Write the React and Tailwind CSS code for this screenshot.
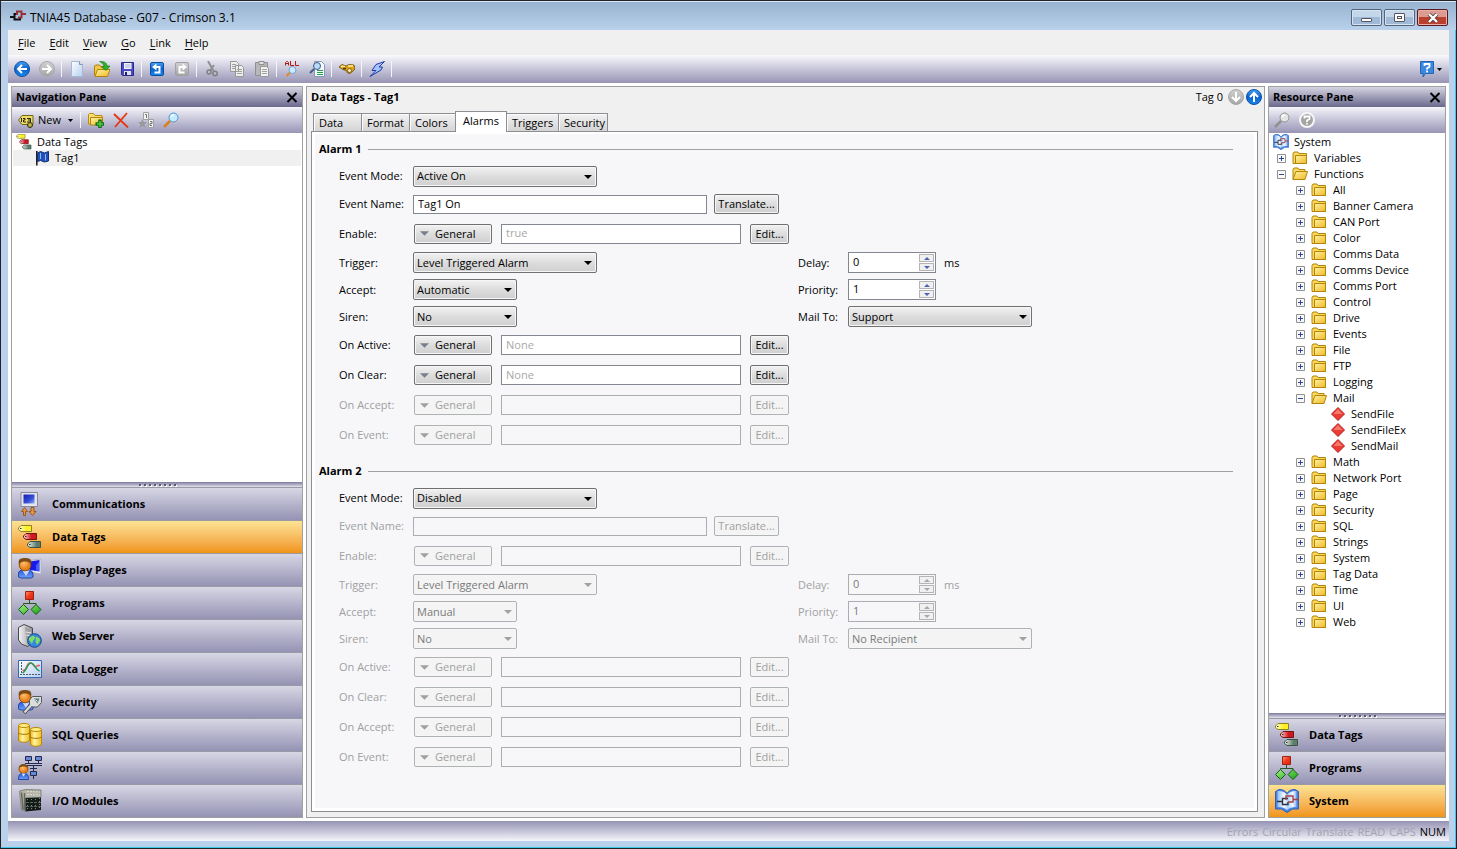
import { useState } from 'react';

// Shared gradients, referenced by id from the small icons below.
function IconDefs() {
  return (
    <svg width="0" height="0" className="absolute" aria-hidden="true">
      <defs>
        <linearGradient id="blue" x1="0" y1="0" x2="0" y2="1">
          <stop offset="0" stopColor="#4aa0f0" />
          <stop offset="0.5" stopColor="#0b62cc" />
          <stop offset="1" stopColor="#1b8af0" />
        </linearGradient>
        <linearGradient id="grey" x1="0" y1="0" x2="0" y2="1">
          <stop offset="0" stopColor="#d2d2d2" />
          <stop offset="1" stopColor="#a4a4a4" />
        </linearGradient>
        <linearGradient id="gold" x1="0" y1="0" x2="1" y2="1">
          <stop offset="0" stopColor="#fff3a0" />
          <stop offset="1" stopColor="#eeb828" />
        </linearGradient>
        <linearGradient id="paper" x1="0" y1="0" x2="1" y2="1">
          <stop offset="0" stopColor="#ffffff" />
          <stop offset="1" stopColor="#b4d0f2" />
        </linearGradient>
        <linearGradient id="red" x1="0" y1="0" x2="1" y2="1">
          <stop offset="0" stopColor="#ff9a80" />
          <stop offset="0.5" stopColor="#f03818" />
          <stop offset="1" stopColor="#d8201c" />
        </linearGradient>
        <linearGradient id="green" x1="0" y1="0" x2="1" y2="1">
          <stop offset="0" stopColor="#a8ee88" />
          <stop offset="1" stopColor="#14a014" />
        </linearGradient>
        <linearGradient id="screen" x1="0" y1="0" x2="1" y2="1">
          <stop offset="0" stopColor="#1420b0" />
          <stop offset="0.6" stopColor="#3850d8" />
          <stop offset="1" stopColor="#8cacf8" />
        </linearGradient>
        <linearGradient id="tag-yellow">
          <stop offset="0" stopColor="#ffffe8" />
          <stop offset="0.6" stopColor="#fff020" />
        </linearGradient>
        <linearGradient id="tag-red">
          <stop offset="0" stopColor="#ffe0e0" />
          <stop offset="0.6" stopColor="#d01820" />
        </linearGradient>
        <linearGradient id="tag-green">
          <stop offset="0" stopColor="#e8f4ec" />
          <stop offset="0.7" stopColor="#5c7c6c" />
        </linearGradient>
        <linearGradient id="shirt" x1="0" y1="0" x2="0" y2="1">
          <stop offset="0" stopColor="#2858d8" />
          <stop offset="1" stopColor="#70a0f8" />
        </linearGradient>
        <linearGradient id="drum">
          <stop offset="0" stopColor="#f0b820" />
          <stop offset="0.35" stopColor="#fff4a0" />
          <stop offset="1" stopColor="#f0c028" />
        </linearGradient>
        <linearGradient id="page">
          <stop offset="0" stopColor="#90c0f8" />
          <stop offset="0.35" stopColor="#f4faff" />
          <stop offset="0.55" stopColor="#a8d0fc" />
          <stop offset="0.8" stopColor="#f4faff" />
          <stop offset="1" stopColor="#88b4f4" />
        </linearGradient>
        <linearGradient id="case">
          <stop offset="0" stopColor="#f4f4f4" />
          <stop offset="0.5" stopColor="#c8c8cc" />
          <stop offset="1" stopColor="#8c8c90" />
        </linearGradient>
        <radialGradient id="skin" cx="0.4" cy="0.35">
          <stop offset="0" stopColor="#ffc070" />
          <stop offset="1" stopColor="#e88018" />
        </radialGradient>
      </defs>
    </svg>
  );
}

function Icon({ size = 16, children }) {
  return (
    <svg width={size} height={size} viewBox={`0 0 ${size} ${size}`} fill="none" className="shrink-0" aria-hidden="true">
      {children}
    </svg>
  );
}

const CrimsonIcon = () => (
  <Icon>
    <path d="M0 9h4M8 6H4.500v5.500H10V9" stroke="#111" strokeWidth="2" />
    <path d="M16 6h-4.500M7 7V3.500h4.500v6H8" stroke="#983038" strokeWidth="2" />
  </Icon>
);

function RoundArrow({ fill, d }) {
  return (
    <Icon>
      <circle cx="8" cy="8" r="7.500" fill={fill} stroke={fill === 'url(#blue)' ? '#0a50a8' : '#a8a8a8'} />
      <path d={d} stroke="#fff" strokeWidth="2" />
    </Icon>
  );
}
const BackIcon = () => <RoundArrow fill="url(#blue)" d="M13 8H4M8 4L4 8l4 4" />;
const ForwardIcon = () => <RoundArrow fill="url(#grey)" d="M3 8h9M8 4l4 4-4 4" />;

const NewIcon = () => (
  <Icon>
    <path d="M2.500.5h8l3 3v12h-11z" fill="url(#paper)" stroke="#a8b8d4" />
    <path d="M10.500.5v3h3" fill="#d8e6f8" stroke="#7c94bc" />
  </Icon>
);

const OpenIcon = () => (
  <Icon>
    <path d="M.5 14V5l1-1h4l1 1.500h6V14z" fill="#f0c848" stroke="#b08008" />
    <path d="M1 15.500l2.500-7H16l-2.500 7z" fill="url(#gold)" stroke="#b48408" />
    <path d="M5.500.5c4-.5 7.500 1 7.500 4.500h3L12 9.500 7.500 6H10C10 3 8 2 5.500.5z" fill="#30b028" stroke="#107810" strokeWidth="0.6" />
  </Icon>
);

const SaveIcon = () => (
  <Icon>
    <path d="M2.500 1.500h12v13h-11l-1-1z" fill="#4a4ac0" stroke="#2a2a90" />
    <path d="M5 2h7.500v6H5z" fill="#f0f2fc" />
    <path d="M6 4h5.500M6 6h5.500" stroke="#a8b0d8" />
    <path d="M5 10h7v4H5z" fill="#e0e0f0" />
    <path d="M6 11h2v3H6z" fill="#22226c" />
  </Icon>
);

function TurnIcon({ fill, stroke, flip }) {
  return (
    <Icon>
      <rect x="1.500" y="1.500" width="13" height="13" rx="1.500" fill={fill} stroke={stroke} />
      <g transform={flip ? 'translate(16 0) scale(-1 1)' : undefined}>
        <path d="M6 6h4.500v5.500H5.500" stroke="#fff" strokeWidth="2" />
        <path d="M3 6l4.500-3.500v7z" fill="#fff" />
      </g>
    </Icon>
  );
}
const UndoIcon = () => <TurnIcon fill="url(#blue)" stroke="#0a50a0" />;
const RedoIcon = () => <TurnIcon fill="url(#grey)" stroke="#a0a0a0" flip />;

const CutIcon = () => (
  <Icon>
    <path d="M4 0l5.500 10M10 4L6 10" stroke="#909090" strokeWidth="2" />
    <circle cx="5" cy="11" r="2" stroke="#808080" strokeWidth="1.500" />
    <circle cx="11" cy="12.500" r="2.200" stroke="#808080" strokeWidth="1.500" />
  </Icon>
);

const CopyIcon = () => (
  <Icon>
    <path d="M1.500.5h6l2 2v8h-8zM6.500 4.500h6l2 2v9h-8z" fill="#ececec" stroke="#989898" />
    <path d="M3 3.500h4M3 5.500h3M3 7.500h3M8 8.500h5M8 10.500h5M8 12.500h5" stroke="#a0a0a0" />
  </Icon>
);

const PasteIcon = () => (
  <Icon>
    <path d="M1.500 1.500h12v13h-12z" fill="#b8b8b8" stroke="#909090" />
    <path d="M5 .5h5v3H5z" fill="#e0e0e0" stroke="#909090" />
    <path d="M6.500 5.500h6l2 2v8h-8z" fill="#f2f2f2" stroke="#989898" />
    <path d="M8 8.500h5M8 10.500h5M8 12.500h5" stroke="#a0a0a0" />
  </Icon>
);

const FindAllIcon = () => (
  <Icon>
    <path d="M6 11.500L2.500 15" stroke="#e08828" strokeWidth="2.200" />
    <circle cx="8.500" cy="9" r="3.500" fill="#c8ecff" stroke="#78a0d0" />
    <path d="M1.500 4.500V1.500l1-1h1l1 1v3M1.500 2.500h3M6.500 0v4.500H10M11.500 0v4.500H15" stroke="#b01818" />
  </Icon>
);

const FindInPageIcon = () => (
  <Icon>
    <path d="M5.500.5h7l3 3v12h-10z" fill="#f4f8ff" stroke="#8898b8" />
    <path d="M8 9.500h6M8 11.500h6M8 13.500h6" stroke="#20a040" />
    <path d="M5 8l-4 4" stroke="#486088" strokeWidth="2.200" />
    <circle cx="8" cy="5" r="3.500" fill="#b8dcf8" stroke="#405888" />
  </Icon>
);

const BinocularsIcon = () => (
  <Icon>
    <path d="M0 6l3-2.500 4 1.500 3-1.500 5 .5 1 4-2 2-3 2.500-2.500-.5-1-2.500L5 9 3 8z" fill="#e0a018" stroke="#704c08" strokeWidth="0.800" />
    <path d="M2 5.500h4M9 5h5" stroke="#fff0a8" strokeWidth="1.500" />
    <circle cx="10.500" cy="9.500" r="2" fill="#fff0b0" stroke="#886010" />
    <path d="M4 7.500h3" stroke="#503404" strokeWidth="1.500" />
  </Icon>
);

const BoltIcon = () => (
  <Icon>
    <path d="M15.500.5L7 3.500 3 9.500h4L1 15.500 12 9l1.500-3H10z" fill="#a8c4fc" stroke="#1c3ca8" />
  </Icon>
);

const HelpIcon = () => (
  <Icon>
    <path d="M1.500.5h13v12h-8L4 16v-3.500H1.500z" fill="#3c88dc" stroke="#2464b4" />
    <path d="M5.500 5V3h5v2.500L8 7.500V8.500M8 9.500v2" stroke="#fff" strokeWidth="1.800" />
  </Icon>
);

const NumberTagIcon = () => (
  <Icon>
    <path d="M.5 8L4 3.500h11v9H4z" fill="#f0dc60" stroke="#70681c" />
    <path d="M3.500 6v4M5 6.500h2V8H5.500v2H8M9 6.500h3.500v3.500H9M10 8h2" stroke="#222" strokeWidth="1" />
    <path d="M12 10v6M9 13h6" stroke="#404010" strokeWidth="3" />
    <path d="M12 11v4M10 13h4" stroke="#f0e060" />
  </Icon>
);

const NewFolderIcon = () => (
  <Icon>
    <path d="M.5 12V2.500l1-1h4l1.500 2h7V12z" fill="#f8e070" stroke="#b88c10" />
    <path d="M2.500 13V5.500h12V13z" fill="url(#gold)" stroke="#b48408" />
    <path d="M12 7.500v8.500M7.500 12H16" stroke="#0c6c18" strokeWidth="3.500" />
    <path d="M12 9v6M9 12h6" stroke="#50d040" strokeWidth="1.500" />
  </Icon>
);

const DeleteIcon = () => (
  <Icon>
    <path d="M1 2l14 13.500M14 1L2 15" stroke="#e83410" strokeWidth="1.800" />
  </Icon>
);

const SortIcon = () => (
  <Icon>
    <path d="M5.500.5h5v7h-5zM10.500 7.500h5v8h-5z" fill="#f4f4f4" stroke="#a0a0a0" />
    <path d="M7 2.500h1.500V6M12 9.500h2v2h-2v2h2" stroke="#707070" />
    <path d="M4.500 7l1.300 3 3.200.3-2.500 2L7.500 16l-3-2-3 2 1-3.700-2.500-2 3.200-.3z" fill="#989898" />
  </Icon>
);

const SearchIcon = ({ disabled }) => (
  <Icon>
    <path d="M7 9l-6 6" stroke={disabled ? '#909090' : '#d88020'} strokeWidth="2.500" />
    <circle cx="10.500" cy="5.500" r="4.500" fill={disabled ? '#e4e4e4' : '#c0ecff'} stroke={disabled ? '#909090' : '#5890cc'} />
    <path d="M8 5a3 3 0 013-2" stroke="#fff" strokeWidth="1.500" />
  </Icon>
);

const HelpRoundIcon = () => (
  <Icon>
    <circle cx="8" cy="8" r="7" fill="#a4a4a4" stroke="#f6f6f6" strokeWidth="2" />
    <path d="M5.500 6.500V4.500h5v2.500L8 8.500V10M8 11v1.500" stroke="#fff" strokeWidth="1.800" />
  </Icon>
);

const FlagIcon = () => (
  <Icon>
    <path d="M.8 1v14.500" stroke="#202020" strokeWidth="1.600" />
    <path d="M1.500 3l3-1.500 4 1.500 4-1.500V11l-4 1-4-1.500-3 1z" fill="#2050b8" stroke="#103078" />
    <path d="M4.500 3v6M9.500 4v6.500" stroke="#90b8f4" />
  </Icon>
);

const FolderIcon = () => (
  <Icon>
    <path d="M1 13.500v-10l1-1.500h4l1 1.500h7.500v10z" fill="#f8d860" stroke="#b48408" />
    <path d="M3.500 13.500v-8h11v8z" fill="url(#gold)" stroke="#b48408" />
  </Icon>
);

const FolderOpenIcon = () => (
  <Icon>
    <path d="M1 13.500v-10l1-1.500h4l1 1.500h6v3" fill="#f8d860" stroke="#b48408" />
    <path d="M1 13.500l3-8h11.500l-2.500 8z" fill="url(#gold)" stroke="#b48408" />
  </Icon>
);

const DiamondIcon = () => (
  <Icon>
    <path d="M8 1.500L14.500 8 8 14.500 1.500 8z" fill="#e83c34" stroke="#b82020" />
    <path d="M8 3L3.500 8h9z" fill="#f87868" />
  </Icon>
);

// The larger pane icons are drawn on a 24 unit grid and scaled when they
// double as tree icons.
function BigIcon({ size = 24, children }) {
  return (
    <svg width={size} height={size} viewBox="0 0 24 24" fill="none" className="shrink-0" aria-hidden="true">
      {children}
    </svg>
  );
}

const TagsIcon = ({ size }) => (
  <BigIcon size={size}>
    <path d="M.5 3l2.500-2.500h10.500v6H3L.5 4.500z" fill="url(#tag-yellow)" stroke="#8c8420" />
    <path d="M5.500 11l2.500-2.500h10.500v6H8l-2.500-2z" fill="url(#tag-red)" stroke="#701414" />
    <path d="M9.500 19l2.500-2.500h10.500v6H12l-2.500-2z" fill="url(#tag-green)" stroke="#3c5448" />
    <path d="M2 3.500h1.500M7 11.500h1.500M11 19.500h1.500" stroke="#303030" />
  </BigIcon>
);

const CommsIcon = () => (
  <BigIcon>
    <path d="M3 .5h16.500v14H3z" fill="#e4e4ec" stroke="#88889c" />
    <path d="M5.500 2.500h11v9h-11z" fill="url(#screen)" />
    <path d="M6.500 15.500l3 4h-2v4h-2v-4h-2zM14.500 23.500l-3.500-4h2v-4h3v4h2z" fill="#e09850" stroke="#9c5818" />
  </BigIcon>
);

const Person = () => (
  <>
    <path d="M.5 19v-3c0-3 2-4 4-4h6c3 0 4.500 2 4.500 5v2l-2 1h-10z" fill="url(#shirt)" stroke="#2048a8" />
    <path d="M4.500 12.500L8 18l3.500-5.500z" fill="#c8d8ff" />
    <circle cx="7" cy="7" r="5.800" fill="url(#skin)" stroke="#98500c" />
    <path d="M1 6.500C-.5 1 3 0 7 0s7.500 1 6 6.500C11.500 4 9 3.500 7 3.500S2.500 4 1 6.500z" fill="#7c4c14" />
  </>
);

const DisplayIcon = () => (
  <BigIcon>
    <path d="M12 2.500L23 1v15l-11-2z" fill="#f0f0f8" stroke="#b0b0c4" />
    <path d="M12 3.500l9.500-1.500v11.500L12 12z" fill="#1818e8" />
    <path d="M18 7v5.500l3 .5V4z" fill="#4060f4" />
    <Person />
  </BigIcon>
);

const ProgramsIcon = () => (
  <BigIcon>
    <path d="M11.500 9v3.500M5.500 15v-2.500h12.500V15" stroke="#205820" />
    <path d="M7.500.5h8v8h-8z" fill="url(#red)" stroke="#a02010" />
    <path d="M5.500 13.500l5 5-5 5-5-5zM18 13.500l5 5-5 5-5-5z" fill="url(#green)" stroke="#106010" />
  </BigIcon>
);

const WebIcon = () => (
  <BigIcon>
    <path d="M.5 3.500L6 .5 14.500 4v15l-5 3.500-6-2.500-3-4z" fill="url(#case)" stroke="#48484c" />
    <path d="M7 3l6.500 3v13L9 21z" fill="#a0a0a4" />
    <path d="M8 8l5 1M8 11l5 1" stroke="#e8e8ec" />
    <circle cx="16.500" cy="16.500" r="6.800" fill="#3488e0" stroke="#184888" />
    <path d="M11 14l4-2.500 2.500 2-2.500 3.500-1 3-3-4zM18 12.500l3.500 2 .5 2.500-3 4-1.500-3.500z" fill="#80dc60" />
  </BigIcon>
);

const LoggerIcon = () => (
  <BigIcon>
    <path d="M.5 3.500h23v17H.5z" fill="url(#paper)" stroke="#3868b0" />
    <path d="M3.500 5v13M2 17.500h20" stroke="#505868" strokeDasharray="2 1" />
    <path d="M4.500 13C9 15 8 6 12 6s4 5 6 3.500 2-1 4-1" stroke="#e06060" strokeWidth="1.500" />
    <path d="M4.500 16c4-2 5-10 8.500-10s4 7 8.500 8" stroke="#289858" strokeWidth="1.500" />
  </BigIcon>
);

const SecurityIcon = () => (
  <BigIcon>
    <Person />
    <path d="M6 23l9-10" stroke="#505050" strokeWidth="4" />
    <path d="M11.500 10l3-3.500h9v6l-4 4.500h-5l-3-3z" fill="#dcdcdc" stroke="#585858" />
    <path d="M6.500 22.500l9-10" stroke="#dcdcdc" strokeWidth="2.200" />
    <path d="M16 8.500h5.500l-2 5z" fill="#507c88" />
    <path d="M17.500 9.500l2 2" stroke="#f0f0f0" />
  </BigIcon>
);

const Cylinder = ({ x, y }) => (
  <g transform={`translate(${x} ${y})`}>
    <path d="M.5 2.500v14.500c0 3 11 3 11 0V2.500z" fill="url(#drum)" stroke="#b88808" />
    <ellipse cx="6" cy="2.500" rx="5.500" ry="2" fill="#ffec80" stroke="#b88808" />
    <path d="M.5 9.500c0 2.500 11 2.500 11 0" stroke="#a87808" />
  </g>
);

const SqlIcon = () => (
  <BigIcon>
    <Cylinder x={0} y={0} />
    <Cylinder x={12} y={4} />
  </BigIcon>
);

const ControlIcon = () => (
  <BigIcon>
    <path d="M7.500.5h6v4h-6zM17.500.5h6v4h-6zM12.500 15.500h6v4h-6z" fill="#6888d8" stroke="#202850" />
    <path d="M10.500 5v2.500M20.500 5v2.500M7 7.500h17M9 9.500h15M15.500 10v5M12 12.500h7M15.500 20v3" stroke="#202850" />
    <circle cx="5.500" cy="13" r="4.500" fill="url(#skin)" stroke="#98500c" />
    <path d="M1 12c-.5-5 9.500-5 9 0-2-2-7-2-9 0z" fill="#7c4c14" />
    <path d="M.5 23.500c0-4.500 1-6 5-6s5 1.500 5 6z" fill="url(#shirt)" stroke="#2048a8" />
    <path d="M3.500 17.500l2 3 2-3z" fill="#d8e4ff" />
  </BigIcon>
);

const ModulesIcon = () => (
  <BigIcon>
    <path d="M1.500 2l6-1.500L23 1v7.500L8 9v13l-4.500-1z" fill="#b4b4a8" stroke="#84847c" />
    <path d="M9 2.500l13 .5M9 5.500l13 .5" stroke="#dcdcd0" strokeDasharray="2 1" />
    <path d="M3.500 3.500l1.500 17M6.500 4v17" stroke="#686860" strokeWidth="1.500" />
    <path d="M7.500 9l15.500-.5V21l-15.500 1.500z" fill="#141c18" />
    <path d="M9.500 10v11M13.500 10v11M17.500 10v11M21.500 9v11" stroke="#78847c" strokeDasharray="1 2" />
    <path d="M8 13.500h15M8 17.500h15" stroke="#586460" strokeDasharray="3 1" />
  </BigIcon>
);

const SystemIcon = ({ size }) => (
  <BigIcon size={size}>
    <path d="M.5 2.500L4 .5c4 0 6 1 8 4 2-3 4-4 8-4l3.500 2v17.500h-6L12 23.500l-5.500-3.500h-6z" fill="#4c84e0" stroke="#2c60c0" />
    <path d="M2.500 2c5 0 7.500 1 9.500 4 2-3 4.500-4 9.500-4v16c-5 0-7.500 1-9.500 3-2-2-4.500-3-9.500-3z" fill="url(#page)" />
    <path d="M2 12.500h5.500M13 9.500H7.500v6h5.500V13" stroke="#303038" strokeWidth="1.400" />
    <path d="M23 10.500h-5M11 11V7h7v6h-5" stroke="#a84048" strokeWidth="1.400" />
  </BigIcon>
);

const NAV_ITEMS = [
  { label: 'Communications', icon: CommsIcon },
  { label: 'Data Tags', icon: TagsIcon },
  { label: 'Display Pages', icon: DisplayIcon },
  { label: 'Programs', icon: ProgramsIcon },
  { label: 'Web Server', icon: WebIcon },
  { label: 'Data Logger', icon: LoggerIcon },
  { label: 'Security', icon: SecurityIcon },
  { label: 'SQL Queries', icon: SqlIcon },
  { label: 'Control', icon: ControlIcon },
  { label: 'I/O Modules', icon: ModulesIcon },
];

const RESOURCE_ITEMS = [
  { label: 'Data Tags', icon: TagsIcon },
  { label: 'Programs', icon: ProgramsIcon },
  { label: 'System', icon: SystemIcon },
];

const TOOLBAR = [
  [
    ['Back', BackIcon],
    ['Forward', ForwardIcon],
  ],
  [
    ['New', NewIcon],
    ['Open', OpenIcon],
    ['Save', SaveIcon],
  ],
  [
    ['Undo', UndoIcon],
    ['Redo', RedoIcon],
  ],
  [
    ['Cut', CutIcon],
    ['Copy', CopyIcon],
    ['Paste', PasteIcon],
  ],
  [
    ['Find All', FindAllIcon],
    ['Find', FindInPageIcon],
  ],
  [['Browse', BinocularsIcon]],
  [['Download', BoltIcon]],
];

const FUNCTIONS_BEFORE_MAIL = [
  'All', 'Banner Camera', 'CAN Port', 'Color', 'Comms Data', 'Comms Device', 'Comms Port',
  'Control', 'Drive', 'Events', 'File', 'FTP', 'Logging',
];
const MAIL_FUNCTIONS = ['SendFile', 'SendFileEx', 'SendMail'];
const FUNCTIONS_AFTER_MAIL = [
  'Math', 'Network Port', 'Page', 'Security', 'SQL', 'Strings', 'System', 'Tag Data', 'Time', 'UI', 'Web',
];

function Separator() {
  return (
    <div className="w-[5px] h-4 flex justify-center">
      <div className="w-px h-full bg-[#f4f4fa]" />
    </div>
  );
}

function ToolButton({ label, children }) {
  return (
    <button type="button" aria-label={label} className="w-[25px] h-6 flex items-center justify-center">
      {children}
    </button>
  );
}

function DownArrow({ className }) {
  return (
    <svg width="8" height="4" viewBox="0 0 8 4" className={className} aria-hidden="true">
      <path d="M0 0h8L4 4z" fill="currentColor" />
    </svg>
  );
}

function TitleBar() {
  return (
    <header className="h-[28px] shrink-0 pl-[9px] pr-[8px] flex items-center gap-1 bg-linear-to-b from-[#98b3d1] to-[#b9d1ea]">
      <CrimsonIcon />
      <h1 className="flex-1 pt-[3px] text-[12px]">TNIA45 Database - G07 - Crimson 3.1</h1>
      <div className="pt-[3px] flex gap-[2px]">
        <button type="button" aria-label="Minimize" className="w-[31px] h-[17px] flex items-center justify-center rounded-[2px] border border-[#53657c] bg-linear-to-b from-[#c4d6ea] from-50% to-[#9fb9d6] to-50% shadow-[inset_0_0_0_1px_#d6e4f2]">
          <span className="w-[11px] h-[4px] mt-1 border border-[#53545c] bg-white rounded-[1px]" />
        </button>
        <button type="button" aria-label="Maximize" className="w-[31px] h-[17px] flex items-center justify-center rounded-[2px] border border-[#53657c] bg-linear-to-b from-[#c4d6ea] from-50% to-[#9fb9d6] to-50% shadow-[inset_0_0_0_1px_#d6e4f2]">
          <span className="w-[11px] h-[9px] flex items-center justify-center border border-[#53545c] bg-white rounded-[1px]">
            <span className="w-[5px] h-[3px] border border-[#53545c]" />
          </span>
        </button>
        <button type="button" aria-label="Close" className="w-[31px] h-[17px] flex items-center justify-center rounded-[2px] border border-[#5a1820] bg-linear-to-b from-[#dc9a90] from-50% to-[#b8402c] to-50% shadow-[inset_0_0_0_1px_#e8b0a8]">
          <svg width="12" height="10" viewBox="0 0 12 10" aria-hidden="true">
            <path d="M2 1l8 8M10 1L2 9" stroke="#5c4040" strokeWidth="4" />
            <path d="M2 1l8 8M10 1L2 9" stroke="#fff" strokeWidth="2.400" />
          </svg>
        </button>
      </div>
    </header>
  );
}

function MenuBar() {
  return (
    <nav className="h-[25px] shrink-0 pl-[3px] flex items-center bg-[#f0f0f0]">
      {['File', 'Edit', 'View', 'Go', 'Link', 'Help'].map((item) => (
        <button key={item} type="button" className="px-[7px]">
          <span className="underline underline-offset-2">{item[0]}</span>
          {item.slice(1)}
        </button>
      ))}
    </nav>
  );
}

function MainToolbar() {
  return (
    <div className="h-[28px] shrink-0 pl-px pr-[7px] flex items-center bg-linear-to-b from-[#f9f9fd] to-[#9895b5]">
      {TOOLBAR.map((group, i) => (
        <div key={i} className="flex items-center">
          {group.map(([label, Glyph]) => (
            <ToolButton key={label} label={label}>
              <Glyph />
            </ToolButton>
          ))}
          <Separator />
        </div>
      ))}
      <button type="button" aria-label="Help" className="ml-auto flex items-center gap-[2px]">
        <HelpIcon />
        <svg width="5" height="3" viewBox="0 0 5 3" aria-hidden="true">
          <path d="M0 0h5L2.500 3z" fill="#000" />
        </svg>
      </button>
    </div>
  );
}

function PaneTitle({ children }) {
  return (
    <div className="h-5 shrink-0 px-1 flex items-center justify-between bg-linear-to-b from-[#d6d5e3] to-[#6b698c]">
      <h2 className="font-bold">{children}</h2>
      <button type="button" aria-label={`Close ${children}`}>
        <svg width="12" height="11" viewBox="0 0 12 11" aria-hidden="true">
          <path d="M1.500 1l9 9M10.500 1l-9 9" stroke="#000" strokeWidth="2" />
        </svg>
      </button>
    </div>
  );
}

function Splitter() {
  return (
    <div className="h-[6px] shrink-0 flex items-center justify-center gap-[3px] border-b border-[#9a9aa4] bg-linear-to-b from-[#7d7b9b] to-[#e2e1ee]">
      {Array.from({ length: 8 }, (_, i) => (
        <span key={i} className="size-[2px] bg-[#5c5a70] shadow-[1px_1px_0_#fff]" />
      ))}
    </div>
  );
}

function CategoryList({ items, active }) {
  return (
    <ul className="shrink-0">
      {items.map(({ label, icon: Glyph }) => (
        <li key={label} className="border-b border-[#9a9aa4] last:border-b-0">
          <button
            type="button"
            className={
              label === active
                ? 'w-full h-8 pl-[6px] flex items-center gap-[10px] font-bold bg-linear-to-b from-[#fbe394] to-[#f09412]'
                : 'w-full h-8 pl-[6px] flex items-center gap-[10px] font-bold bg-linear-to-b from-[#d8d7e5] to-[#9593b3]'
            }
          >
            <Glyph />
            {label}
          </button>
        </li>
      ))}
    </ul>
  );
}

function NavigationPane() {
  return (
    <aside className="w-[292px] shrink-0 flex flex-col border border-[#a0a0a0] bg-white">
      <PaneTitle>Navigation Pane</PaneTitle>
      <div className="h-[26px] shrink-0 pl-[6px] flex items-center bg-linear-to-b from-[#f5f5fb] to-[#9895b5]">
        <button type="button" className="w-[60px] flex items-center gap-1">
          <NumberTagIcon />
          New
          <svg width="5" height="3" viewBox="0 0 5 3" className="ml-[3px]" aria-hidden="true">
            <path d="M0 0h5L2.500 3z" fill="#000" />
          </svg>
        </button>
        <Separator />
        <ToolButton label="New Folder"><NewFolderIcon /></ToolButton>
        <ToolButton label="Delete"><DeleteIcon /></ToolButton>
        <ToolButton label="Sort"><SortIcon /></ToolButton>
        <ToolButton label="Find"><SearchIcon /></ToolButton>
      </div>
      <ul className="flex-1 min-h-0 p-px">
        <li className="h-4 pl-[3px] flex items-center gap-[5px]">
          <TagsIcon size={16} />
          Data Tags
        </li>
        <li className="h-4 pl-[23px] flex items-center gap-[3px] bg-[#f0f0f0]">
          <FlagIcon />
          Tag1
        </li>
      </ul>
      <Splitter />
      <CategoryList items={NAV_ITEMS} active="Data Tags" />
    </aside>
  );
}

function Expander({ open, label }) {
  return (
    <button type="button" aria-label={`${open ? 'Collapse' : 'Expand'} ${label}`} aria-expanded={open}>
      <svg width="9" height="9" viewBox="0 0 9 9" aria-hidden="true">
        <path d="M.5.5h8v8h-8z" fill="#f8f8f8" stroke="#919191" />
        <path d={open ? 'M2 4.500h5' : 'M2 4.500h5M4.500 2v5'} stroke="#3048a0" />
      </svg>
    </button>
  );
}

function TreeFolder({ label, open = false, children }) {
  return (
    <li>
      <div className="h-4 flex items-center gap-[6px]">
        <Expander open={open} label={label} />
        {open ? <FolderOpenIcon /> : <FolderIcon />}
        {label}
      </div>
      {children}
    </li>
  );
}

function ResourcePane() {
  return (
    <aside className="w-[178px] shrink-0 flex flex-col border border-[#a0a0a0] bg-white">
      <PaneTitle>Resource Pane</PaneTitle>
      <div className="h-[26px] shrink-0 flex items-center bg-linear-to-b from-[#f5f5fb] to-[#9895b5]">
        <ToolButton label="Find"><SearchIcon disabled /></ToolButton>
        <ToolButton label="Help"><HelpRoundIcon /></ToolButton>
      </div>
      <div className="flex-1 min-h-0 pt-px overflow-hidden">
        <div className="h-4 pl-1 flex items-center gap-[5px]">
          <SystemIcon size={16} />
          System
        </div>
        <ul className="pl-2">
          <TreeFolder label="Variables" />
          <TreeFolder label="Functions" open>
            <ul className="pl-[19px]">
              {FUNCTIONS_BEFORE_MAIL.map((name) => (
                <TreeFolder key={name} label={name} />
              ))}
              <TreeFolder label="Mail" open>
                <ul className="pl-[34px]">
                  {MAIL_FUNCTIONS.map((name) => (
                    <li key={name} className="h-4 flex items-center gap-[5px]">
                      <DiamondIcon />
                      {name}
                    </li>
                  ))}
                </ul>
              </TreeFolder>
              {FUNCTIONS_AFTER_MAIL.map((name) => (
                <TreeFolder key={name} label={name} />
              ))}
            </ul>
          </TreeFolder>
        </ul>
      </div>
      <Splitter />
      <CategoryList items={RESOURCE_ITEMS} active="System" />
    </aside>
  );
}

function Select({ id, value, wide, disabled }) {
  return (
    <div className={wide ? 'relative w-[184px]' : 'relative w-[104px]'}>
      <select
        id={id}
        disabled={disabled}
        defaultValue={value}
        className="block w-full h-[21px] pl-[3px] appearance-none rounded-[2px] border border-[#707070] bg-linear-to-b from-[#f2f2f2] via-[#dddddd] via-50% to-[#cfcfcf] shadow-[inset_0_0_0_1px_#f6f6f6] disabled:border-[#adb2b5] disabled:bg-none disabled:bg-[#f4f4f4] disabled:text-[#7a7a7a] disabled:opacity-100"
      >
        <option>{value}</option>
      </select>
      <DownArrow
        className={
          disabled
            ? 'absolute right-[5px] top-[9px] text-[#a0a0a0] pointer-events-none'
            : 'absolute right-[5px] top-[9px] text-black pointer-events-none'
        }
      />
    </div>
  );
}

function PushButton({ children, className, disabled, label }) {
  return (
    <button
      type="button"
      aria-label={label}
      disabled={disabled}
      className={`${className} h-5 flex items-center rounded-[2px] border border-[#707070] bg-linear-to-b from-[#f2f2f2] via-[#dddddd] via-50% to-[#cfcfcf] shadow-[inset_0_0_0_1px_#f6f6f6] disabled:border-[#adb2b5] disabled:bg-none disabled:bg-[#f4f4f4] disabled:text-[#a0a0a0]`}
    >
      {children}
    </button>
  );
}

function Spinner({ id, value, disabled }) {
  return (
    <div className={disabled ? 'w-[88px] h-[21px] p-px flex border border-[#abadb3]' : 'w-[88px] h-[21px] p-px flex border border-[#828790] bg-white'}>
      <input
        id={id}
        type="text"
        inputMode="numeric"
        defaultValue={value}
        disabled={disabled}
        className="min-w-0 flex-1 pl-[3px] pb-[2px] bg-transparent disabled:text-[#7a7a7a]"
      />
      <div className="w-[15px] flex flex-col gap-px">
        <button type="button" aria-label="Increase" disabled={disabled} className="flex-1 flex items-center justify-center border border-[#b4b4b4] bg-[#f0f0f0] text-[#4a66b0] disabled:text-[#a8a8a8]">
          <DownArrow className="rotate-180 w-[6px] h-[3px]" />
        </button>
        <button type="button" aria-label="Decrease" disabled={disabled} className="flex-1 flex items-center justify-center border border-[#b4b4b4] bg-[#f0f0f0] text-[#4a66b0] disabled:text-[#a8a8a8]">
          <DownArrow className="w-[6px] h-[3px]" />
        </button>
      </div>
    </div>
  );
}

function Row({ label, id, disabled, height = 'h-[27px]', children, side }) {
  return (
    <div className={`${height} pl-5 flex items-center`}>
      <label htmlFor={id} className={disabled ? 'w-[74px] shrink-0 text-[#a0a0a0]' : 'w-[74px] shrink-0'}>
        {label}:
      </label>
      <div className="w-[385px] shrink-0 flex items-center">{children}</div>
      {side}
    </div>
  );
}

function SideField({ label, id, disabled, unit, children }) {
  return (
    <div className={disabled ? 'flex items-center text-[#a0a0a0]' : 'flex items-center'}>
      <label htmlFor={id} className="w-[50px]">{label}:</label>
      {children}
      {unit && <span className="ml-2">{unit}</span>}
    </div>
  );
}

function ActionRow({ label, id, value, disabled, height = 'h-[30px]' }) {
  return (
    <Row label={label} id={id} disabled={disabled} height={height}>
      <PushButton disabled={disabled} label={`${label} source`} className="w-[78px] ml-px pl-[5px] gap-[6px]">
        <DownArrow className={disabled ? 'w-[9px] h-[5px] text-[#a0a0a0]' : 'w-[9px] h-[5px] text-[#7a8088]'} />
        General
      </PushButton>
      <input
        id={id}
        type="text"
        placeholder={value}
        disabled={disabled}
        className="w-[240px] h-5 ml-[9px] pl-1 pb-[2px] border border-[#828790] bg-white placeholder:text-[#a8a8a8] disabled:border-[#abadb3] disabled:bg-transparent"
      />
      <PushButton disabled={disabled} className="w-[39px] ml-[9px] justify-center">Edit...</PushButton>
    </Row>
  );
}

function AlarmSection({ index, alarm }) {
  const off = alarm.mode === 'Disabled';
  const id = (name) => `alarm${index}-${name}`;
  return (
    <section>
      <div className="h-[26px] flex items-center gap-[6px]">
        <h3 className="font-bold">Alarm {index}</h3>
        <div className="flex-1 h-px bg-[#a0a0a0]" />
      </div>
      <Row label="Event Mode" id={id('mode')} height="h-7">
        <Select id={id('mode')} value={alarm.mode} wide />
      </Row>
      <Row label="Event Name" id={id('name')} disabled={off} height="h-7">
        <input
          id={id('name')}
          type="text"
          defaultValue={alarm.name}
          disabled={off}
          className="w-[294px] h-[19px] pl-1 pb-px border border-[#828790] bg-white disabled:border-[#abadb3] disabled:bg-transparent"
        />
        <PushButton disabled={off} className="w-[65px] ml-[7px] justify-center">Translate...</PushButton>
      </Row>
      <ActionRow label="Enable" id={id('enable')} value={alarm.enable} disabled={off} height="h-[31px]" />
      <Row
        label="Trigger"
        id={id('trigger')}
        disabled={off}
        side={
          <SideField label="Delay" id={id('delay')} disabled={off} unit="ms">
            <Spinner id={id('delay')} value="0" disabled={off} />
          </SideField>
        }
      >
        <Select id={id('trigger')} value="Level Triggered Alarm" wide disabled={off} />
      </Row>
      <Row
        label="Accept"
        id={id('accept')}
        disabled={off}
        side={
          <SideField label="Priority" id={id('priority')} disabled={off}>
            <Spinner id={id('priority')} value="1" disabled={off} />
          </SideField>
        }
      >
        <Select id={id('accept')} value={alarm.accept} disabled={off} />
      </Row>
      <Row
        label="Siren"
        id={id('siren')}
        disabled={off}
        side={
          <SideField label="Mail To" id={id('mail')} disabled={off}>
            <Select id={id('mail')} value={alarm.mailTo} wide disabled={off} />
          </SideField>
        }
      >
        <Select id={id('siren')} value="No" disabled={off} />
      </Row>
      <ActionRow label="On Active" id={id('on-active')} value={off ? '' : 'None'} disabled={off} />
      <ActionRow label="On Clear" id={id('on-clear')} value={off ? '' : 'None'} disabled={off} />
      <ActionRow label="On Accept" id={id('on-accept')} disabled />
      <ActionRow label="On Event" id={id('on-event')} disabled />
    </section>
  );
}

const ALARMS = [
  { mode: 'Active On', name: 'Tag1 On', enable: 'true', accept: 'Automatic', mailTo: 'Support' },
  { mode: 'Disabled', name: '', enable: '', accept: 'Manual', mailTo: 'No Recipient' },
];

const TABS = [
  { name: 'Data', width: 'w-12' },
  { name: 'Format', width: 'w-12' },
  { name: 'Colors', width: 'w-12' },
  { name: 'Alarms', width: 'w-12' },
  { name: 'Triggers', width: 'w-[52px]' },
  { name: 'Security', width: 'w-[50px]' },
];

function Editor() {
  const [tab, setTab] = useState('Alarms');
  return (
    <main className="flex-1 min-w-0 flex flex-col pl-1 pr-[6px] pb-[5px] border border-[#a0a0a0] bg-[#f0f0f0]">
      <div className="h-5 shrink-0 -mr-1 flex items-center justify-between">
        <h2 className="font-bold">Data Tags - Tag1</h2>
        <div className="flex items-center gap-[2px]">
          <span className="mr-[3px]">Tag 0</span>
          <button type="button" aria-label="Next tag">
            <RoundArrow fill="url(#grey)" d="M8 3v9M4 8l4 4 4-4" />
          </button>
          <button type="button" aria-label="Previous tag">
            <RoundArrow fill="url(#blue)" d="M8 13V4M4 8l4-4 4 4" />
          </button>
        </div>
      </div>
      <div role="tablist" className="h-6 shrink-0 pl-[2px] flex items-end">
        {TABS.map(({ name, width }) => (
          <button
            key={name}
            type="button"
            role="tab"
            aria-selected={tab === name}
            onClick={() => setTab(name)}
            className={
              tab === name
                ? 'relative w-[52px] h-[21px] -mb-px -ml-[2px] -mr-px pb-[2px] border border-b-0 border-[#8c8e94] bg-white'
                : `${width} h-[18px] pl-[5px] text-left border border-b-0 border-r-0 last:border-r border-[#8c8e94] bg-linear-to-b from-[#f2f2f2] to-[#d4d4d4] shadow-[inset_1px_1px_0_#fcfcfc]`
            }
          >
            {name}
          </button>
        ))}
      </div>
      <div className="flex-1 min-h-0 flex border border-[#8c8e94] bg-white p-[3px] pt-[2px]">
        <div className="flex-1 min-w-0 pt-[2px] pl-1 pr-[21px] flex flex-col gap-2 bg-[#f7f7fa]">
          {ALARMS.map((alarm, i) => (
            <AlarmSection key={i} index={i + 1} alarm={alarm} />
          ))}
        </div>
      </div>
    </main>
  );
}

function StatusBar() {
  return (
    <footer className="h-5 shrink-0 pr-[3px] pt-[2px] flex items-center justify-end gap-1 text-[#a3a3ad] bg-linear-to-b from-[#9593b3] to-[#f6f6fc]">
      <span>Errors</span>
      <span>Circular</span>
      <span>Translate</span>
      <span>READ</span>
      <span>CAPS</span>
      <span className="text-black">NUM</span>
    </footer>
  );
}

export default function App() {
  return (
    <div className="h-screen flex flex-col bg-[#b9d1ea] border border-[#202428] text-[11px] leading-4 text-black font-['Open_Sans','Noto_Sans',sans-serif] cursor-default shadow-[inset_-1px_-1px_0_#3cc8e8]">
      <IconDefs />
      <div className="h-px shrink-0 bg-[#dfeaf5]" />
      <TitleBar />
      <div className="flex-1 min-h-0 mx-[7px] mb-[7px] flex flex-col bg-white">
        <MenuBar />
        <MainToolbar />
        <div className="flex-1 min-h-0 p-[3px] flex gap-[3px]">
          <NavigationPane />
          <Editor />
          <ResourcePane />
        </div>
        <StatusBar />
      </div>
    </div>
  );
}
